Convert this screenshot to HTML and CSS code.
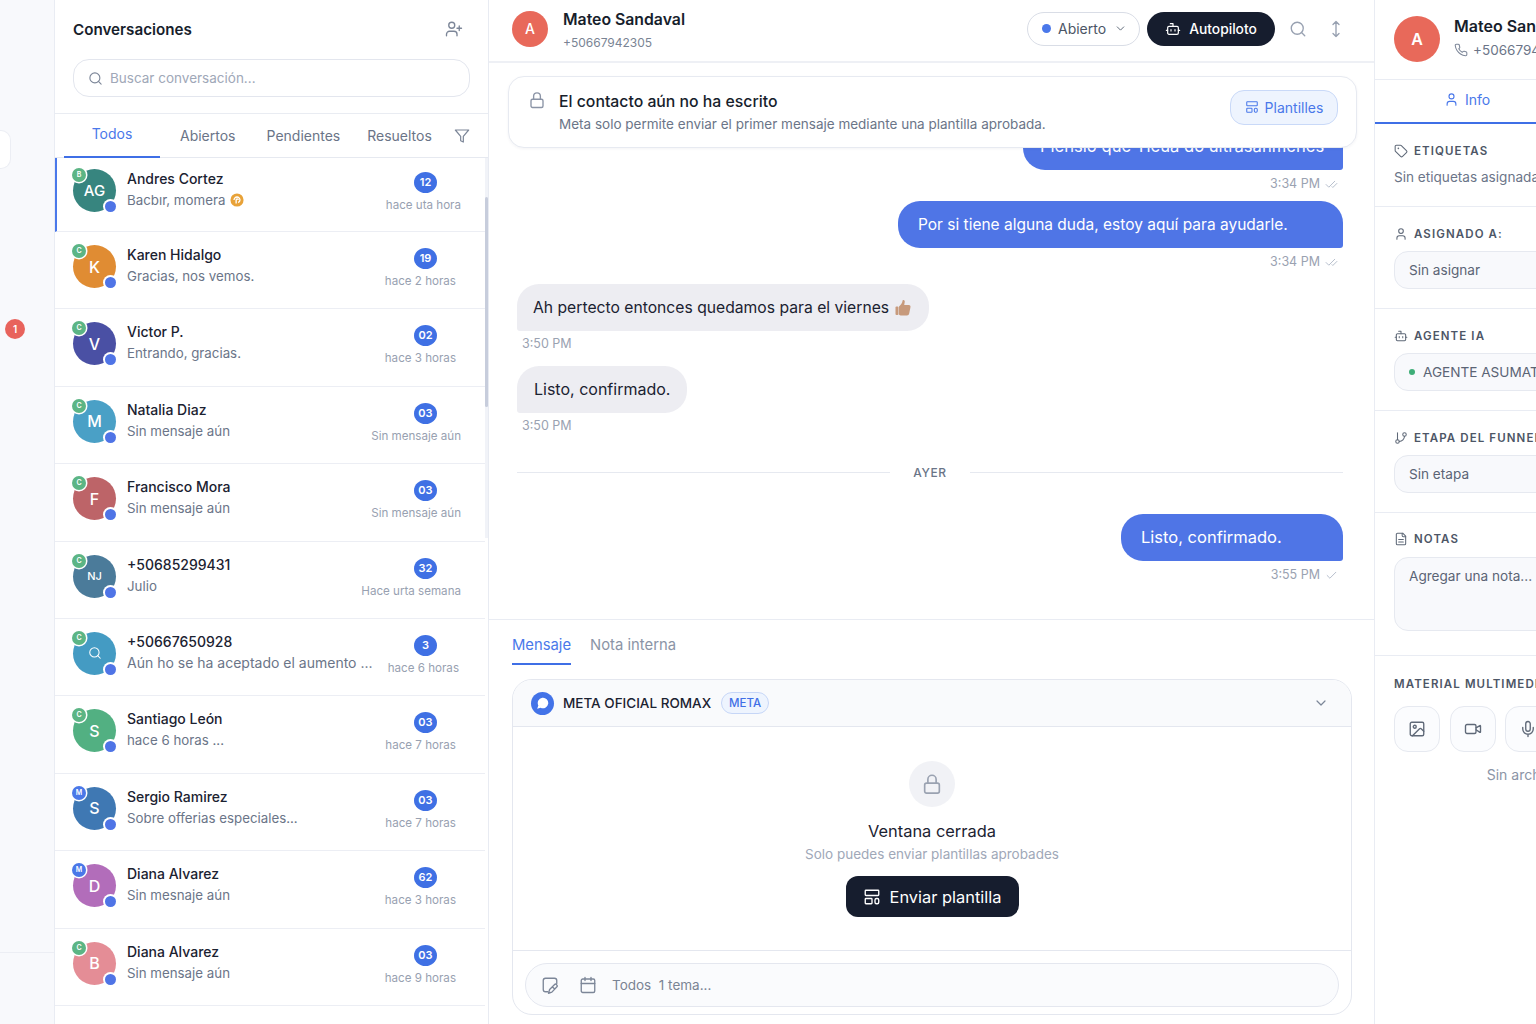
FILE: index.html
```html
<!DOCTYPE html>
<html lang="es">
<head>
  <meta charset="UTF-8" />
  <meta name="viewport" content="width=device-width, initial-scale=1" />
  <title>Conversaciones</title>
  <link rel="stylesheet" href="styles.css">
</head>
<body>

  <!-- Icon sprite -->
  <svg class="sprite" xmlns="http://www.w3.org/2000/svg">
    <symbol id="i-user-plus" viewBox="0 0 24 24"><path d="M16 21v-2a4 4 0 0 0-4-4H6a4 4 0 0 0-4 4v2"/><circle cx="9" cy="7" r="4"/><path d="M19 8v6M22 11h-6"/></symbol>
    <symbol id="i-search" viewBox="0 0 24 24"><circle cx="11" cy="11" r="8"/><path d="m21 21-4.3-4.3"/></symbol>
    <symbol id="i-filter" viewBox="0 0 24 24"><path d="M22 3H2l8 9.46V19l4 2v-8.54z"/></symbol>
    <symbol id="i-lock" viewBox="0 0 24 24"><rect x="4" y="11" width="16" height="11" rx="2"/><path d="M7.5 11V7a4.5 4.5 0 0 1 9 0v4"/></symbol>
    <symbol id="i-bot" viewBox="0 0 24 24"><path d="M12 8V4H8"/><rect x="4" y="8" width="16" height="12" rx="2"/><path d="M2 14h2M20 14h2M15 13v2M9 13v2"/></symbol>
    <symbol id="i-updown" viewBox="0 0 24 24"><path d="M12 2v20M8 6l4-4 4 4M8 18l4 4 4-4"/></symbol>
    <symbol id="i-template" viewBox="0 0 24 24"><rect x="3" y="3" width="18" height="7" rx="1"/><rect x="3" y="14" width="9" height="7" rx="1"/><rect x="16" y="14" width="5" height="7" rx="2"/></symbol>
    <symbol id="i-checks" viewBox="0 0 24 24"><path d="M18 6 7 17l-5-5M22 10l-7.5 7.5L13 16"/></symbol>
    <symbol id="i-check" viewBox="0 0 24 24"><path d="M20 6 9 17l-5-5"/></symbol>
    <symbol id="i-phone" viewBox="0 0 24 24"><path d="M22 16.92v3a2 2 0 0 1-2.18 2 19.79 19.79 0 0 1-8.63-3.07 19.5 19.5 0 0 1-6-6 19.79 19.79 0 0 1-3.07-8.67A2 2 0 0 1 4.11 2h3a2 2 0 0 1 2 1.72 12.84 12.84 0 0 0 .7 2.81 2 2 0 0 1-.45 2.11L8.09 9.91a16 16 0 0 0 6 6l1.27-1.27a2 2 0 0 1 2.11-.45 12.84 12.84 0 0 0 2.81.7A2 2 0 0 1 22 16.92z"/></symbol>
    <symbol id="i-user" viewBox="0 0 24 24"><path d="M19 21v-2a4 4 0 0 0-4-4H9a4 4 0 0 0-4 4v2"/><circle cx="12" cy="7" r="4"/></symbol>
    <symbol id="i-tag" viewBox="0 0 24 24"><path d="M12.586 2.586A2 2 0 0 0 11.172 2H4a2 2 0 0 0-2 2v7.172a2 2 0 0 0 .586 1.414l8.704 8.704a2.426 2.426 0 0 0 3.42 0l6.58-6.58a2.426 2.426 0 0 0 0-3.42z"/><circle cx="7.5" cy="7.5" r=".5"/></symbol>
    <symbol id="i-branch" viewBox="0 0 24 24"><path d="M6 3v12"/><circle cx="18" cy="6" r="3"/><circle cx="6" cy="18" r="3"/><path d="M18 9a9 9 0 0 1-9 9"/></symbol>
    <symbol id="i-file" viewBox="0 0 24 24"><path d="M15 2H6a2 2 0 0 0-2 2v16a2 2 0 0 0 2 2h12a2 2 0 0 0 2-2V7Z"/><path d="M14 2v4a2 2 0 0 0 2 2h4M16 13H8M16 17H8"/></symbol>
    <symbol id="i-image" viewBox="0 0 24 24"><rect x="3" y="3" width="18" height="18" rx="2"/><circle cx="9" cy="9" r="2"/><path d="m21 15-3.086-3.086a2 2 0 0 0-2.828 0L6 21"/></symbol>
    <symbol id="i-video" viewBox="0 0 24 24"><path d="m16 13 5.223 3.482a.5.5 0 0 0 .777-.416V7.87a.5.5 0 0 0-.752-.432L16 10.5"/><rect x="2" y="6" width="14" height="12" rx="2"/></symbol>
    <symbol id="i-mic" viewBox="0 0 24 24"><path d="M12 2a3 3 0 0 0-3 3v7a3 3 0 0 0 6 0V5a3 3 0 0 0-3-3Z"/><path d="M19 10v2a7 7 0 0 1-14 0v-2M12 19v3"/></symbol>
    <symbol id="i-chevron" viewBox="0 0 24 24"><path d="m6 9 6 6 6-6"/></symbol>
    <symbol id="i-calendar" viewBox="0 0 24 24"><rect x="3" y="4" width="18" height="18" rx="2"/><path d="M16 2v4M8 2v4M3 10h18"/></symbol>
    <symbol id="i-note" viewBox="0 0 24 24"><path d="M21 10V6a3 3 0 0 0-3-3H6a3 3 0 0 0-3 3v12a3 3 0 0 0 3 3h3"/><path d="m10 23 1.5-5 7-7c1-1 4 1.5 3 3l-7 7.500zM15 14.5l3 2.5"/></symbol>
  </svg>

  <div class="app">

    <!-- Left rail -->
    <aside class="rail">
      <div class="rail-tab"></div>
      <div class="rail-badge">1</div>
      <div class="rail-line"></div>
    </aside>

    <!-- Conversation list -->
    <section class="list-panel">
      <div class="list-head">
        <h2>Conversaciones</h2>
        <svg class="ico ico-18"><use href="#i-user-plus"/></svg>
      </div>
      <div class="search-wrap">
        <div class="search-box">
          <svg class="ico ico-15"><use href="#i-search"/></svg>
          <span>Buscar conversación...</span>
        </div>
      </div>
      <nav class="list-tabs">
        <a class="list-tab active">Todos</a>
        <a class="list-tab">Abiertos</a>
        <a class="list-tab">Pendientes</a>
        <a class="list-tab">Resueltos</a>
        <svg class="ico ico-16 tab-filter"><use href="#i-filter"/></svg>
      </nav>

      <div class="rows">
        <div class="scroll-track"><div class="scroll-thumb"></div></div>

        <div class="row selected">
          <div class="avatar av-teal">AG<span class="src">B</span><span class="dot"></span></div>
          <div class="row-text">
            <div class="row-name">Andres Cortez</div>
            <div class="row-preview">Bacbır, momera
              <svg class="amber" viewBox="0 0 16 16"><circle cx="8" cy="8" r="7.5"/><path d="M4.6 8a3.4 3.4 0 1 1 6.8 0c0 1.6-1 2.4-2 3M7 12V8a1.2 1.2 0 0 1 2.4 0"/></svg>
            </div>
          </div>
          <div class="row-meta"><span class="count">12</span><span class="time">hace uta hora</span></div>
        </div>

        <div class="row">
          <div class="avatar av-orange">K<span class="src">C</span><span class="dot"></span></div>
          <div class="row-text">
            <div class="row-name">Karen Hidalgo</div>
            <div class="row-preview">Gracias, nos vemos.</div>
          </div>
          <div class="row-meta"><span class="count">19</span><span class="time short">hace 2 horas</span></div>
        </div>

        <div class="row">
          <div class="avatar av-indigo">V<span class="src">C</span><span class="dot"></span></div>
          <div class="row-text">
            <div class="row-name">Victor P.</div>
            <div class="row-preview">Entrando, gracias.</div>
          </div>
          <div class="row-meta"><span class="count">02</span><span class="time short">hace 3 horas</span></div>
        </div>

        <div class="row">
          <div class="avatar av-sky">M<span class="src">C</span><span class="dot"></span></div>
          <div class="row-text">
            <div class="row-name">Natalia Diaz</div>
            <div class="row-preview">Sin mensaje aún</div>
          </div>
          <div class="row-meta"><span class="count">03</span><span class="time">Sin mensaje aún</span></div>
        </div>

        <div class="row">
          <div class="avatar av-rose">F<span class="src">C</span><span class="dot"></span></div>
          <div class="row-text">
            <div class="row-name">Francisco Mora</div>
            <div class="row-preview">Sin mensaje aún</div>
          </div>
          <div class="row-meta"><span class="count">03</span><span class="time">Sin mensaje aún</span></div>
        </div>

        <div class="row">
          <div class="avatar av-slate av-small">NJ<span class="src">C</span><span class="dot"></span></div>
          <div class="row-text">
            <div class="row-name">+50685299431</div>
            <div class="row-preview">Julio</div>
          </div>
          <div class="row-meta"><span class="count">32</span><span class="time">Hace urta semana</span></div>
        </div>

        <div class="row">
          <div class="avatar av-cyan"><svg class="ico ico-14 ico-white"><use href="#i-search"/></svg><span class="src">C</span><span class="dot"></span></div>
          <div class="row-text">
            <div class="row-name">+50667650928</div>
            <div class="row-preview long">Aún ho se ha aceptado el aumento ...</div>
          </div>
          <div class="row-meta"><span class="count">3</span><span class="time mid">hace 6 horas</span></div>
        </div>

        <div class="row">
          <div class="avatar av-green">S<span class="src">C</span><span class="dot"></span></div>
          <div class="row-text">
            <div class="row-name">Santiago León</div>
            <div class="row-preview">hace 6 horas ...</div>
          </div>
          <div class="row-meta"><span class="count">03</span><span class="time short">hace 7 horas</span></div>
        </div>

        <div class="row">
          <div class="avatar av-blue">S<span class="src src-blue">M</span><span class="dot"></span></div>
          <div class="row-text">
            <div class="row-name">Sergio Ramirez</div>
            <div class="row-preview">Sobre offerias especiales...</div>
          </div>
          <div class="row-meta"><span class="count">03</span><span class="time short">hace 7 horas</span></div>
        </div>

        <div class="row">
          <div class="avatar av-purple">D<span class="src src-blue">M</span><span class="dot"></span></div>
          <div class="row-text">
            <div class="row-name">Diana Alvarez</div>
            <div class="row-preview">Sin mesnaje aún</div>
          </div>
          <div class="row-meta"><span class="count">62</span><span class="time short">hace 3 horas</span></div>
        </div>

        <div class="row">
          <div class="avatar av-pink">B<span class="src">C</span><span class="dot"></span></div>
          <div class="row-text">
            <div class="row-name">Diana Alvarez</div>
            <div class="row-preview">Sin mensaje aún</div>
          </div>
          <div class="row-meta"><span class="count">03</span><span class="time short">hace 9 horas</span></div>
        </div>
      </div>
    </section>

    <!-- Chat -->
    <main class="chat">
      <header class="chat-head">
        <div class="chat-avatar">A</div>
        <div class="chat-who">
          <div class="chat-name">Mateo Sandaval</div>
          <div class="chat-phone">+50667942305</div>
        </div>
        <div class="status-pill"><span class="status-dot"></span>Abierto<svg class="ico ico-13"><use href="#i-chevron"/></svg></div>
        <div class="auto-pill"><svg class="ico ico-16 ico-white"><use href="#i-bot"/></svg>Autopiloto</div>
        <svg class="ico ico-18 head-search"><use href="#i-search"/></svg>
        <svg class="ico ico-18 head-arrows"><use href="#i-updown"/></svg>
      </header>

      <div class="thread">
        <div class="notice">
          <svg class="ico ico-18 notice-lock"><use href="#i-lock"/></svg>
          <div class="notice-text">
            <div class="notice-title">El contacto aún no ha escrito</div>
            <div class="notice-desc">Meta solo permite enviar el primer mensaje mediante una plantilla aprobada.</div>
          </div>
          <div class="notice-btn"><svg class="ico ico-14 ico-blue"><use href="#i-template"/></svg>Plantilles</div>
        </div>

        <div class="msg out">
          <div class="bubble b-clip">Pienslo que Tieua do ultrasanmenes</div>
          <div class="msg-time">3:34 PM <svg class="ico ico-13"><use href="#i-checks"/></svg></div>
        </div>
        <div class="msg out tight">
          <div class="bubble b-help">Por si tiene alguna duda, estoy aquí para ayudarle.</div>
          <div class="msg-time">3:34 PM <svg class="ico ico-13"><use href="#i-checks"/></svg></div>
        </div>
        <div class="msg in">
          <div class="bubble b-long">Ah pertecto entonces quedamos para el viernes
            <svg class="thumb" viewBox="0 0 18 18"><path d="M9.5 1c1 0 1.5 1 1.2 2.2L10.2 6h4.6c1.4 0 2 1.2 1.6 2.4l-1.2 6.2c-.3 1.2-1 1.9-2.2 1.9H7.4c-1 0-1.9-.4-2.4-1V7.6c1.7-1.6 3.3-3.6 3.5-5.6 0-.6.4-1 1-1z"/><rect x="1.5" y="7.5" width="3" height="8.5" rx="1"/></svg>
          </div>
          <div class="msg-time">3:50 PM</div>
        </div>
        <div class="msg in">
          <div class="bubble">Listo, confirmado.</div>
          <div class="msg-time">3:50 PM</div>
        </div>

        <div class="day-sep"><span>AYER</span></div>

        <div class="msg out">
          <div class="bubble b-done">Listo, confirmado.</div>
          <div class="msg-time">3:55 PM <svg class="ico ico-13"><use href="#i-check"/></svg></div>
        </div>
      </div>

      <div class="composer">
        <div class="comp-tabs">
          <a class="comp-tab active">Mensaje</a>
          <a class="comp-tab">Nota interna</a>
        </div>
        <div class="comp-card">
          <div class="channel">
            <span class="channel-ico"><svg viewBox="0 0 24 24"><path d="M7.9 20A9 9 0 1 0 4 16.1L2 22Z"/></svg></span>
            <span class="channel-name">META OFICIAL ROMAX</span>
            <span class="channel-tag">META</span>
            <svg class="ico ico-16 channel-chev"><use href="#i-chevron"/></svg>
          </div>
          <div class="closed">
            <div class="closed-ico"><svg class="ico ico-22"><use href="#i-lock"/></svg></div>
            <div class="closed-title">Ventana cerrada</div>
            <div class="closed-sub">Solo puedes enviar plantillas aprobades</div>
            <div class="closed-btn"><svg class="ico ico-18 ico-white"><use href="#i-template"/></svg>Enviar plantilla</div>
          </div>
          <div class="comp-foot">
            <div class="comp-input">
              <svg class="ico ico-18"><use href="#i-note"/></svg>
              <svg class="ico ico-18"><use href="#i-calendar"/></svg>
              <span>Todos&nbsp; 1 tema...</span>
            </div>
          </div>
        </div>
      </div>
    </main>

    <!-- Contact info -->
    <aside class="info">
      <div class="info-head">
        <div class="info-avatar">A</div>
        <div>
          <div class="info-name">Mateo Sandaval</div>
          <div class="info-phone"><svg class="ico ico-14"><use href="#i-phone"/></svg>+50667942305</div>
        </div>
      </div>
      <div class="info-tabs">
        <a class="info-tab"><svg class="ico ico-15 ico-blue"><use href="#i-user"/></svg>Info</a>
      </div>

      <section class="info-sec tags">
        <h4><svg class="ico ico-14"><use href="#i-tag"/></svg>Etiquetas</h4>
        <p class="info-empty">Sin etiquetas asignadas</p>
      </section>
      <section class="info-sec">
        <h4><svg class="ico ico-14"><use href="#i-user"/></svg>Asignado a:</h4>
        <div class="field">Sin asignar</div>
      </section>
      <section class="info-sec">
        <h4><svg class="ico ico-14"><use href="#i-bot"/></svg>Agente IA</h4>
        <div class="field"><span class="field-dot"></span>AGENTE ASUMATE</div>
      </section>
      <section class="info-sec">
        <h4><svg class="ico ico-14"><use href="#i-branch"/></svg>Etapa del funnel</h4>
        <div class="field">Sin etapa</div>
      </section>
      <section class="info-sec notes">
        <h4><svg class="ico ico-14"><use href="#i-file"/></svg>Notas</h4>
        <div class="field field-area">Agregar una nota...</div>
      </section>
      <section class="info-sec media">
        <h4>Material multimedia</h4>
        <div class="media-btns">
          <div class="media-btn"><svg class="ico ico-18"><use href="#i-image"/></svg></div>
          <div class="media-btn"><svg class="ico ico-18"><use href="#i-video"/></svg></div>
          <div class="media-btn"><svg class="ico ico-18"><use href="#i-mic"/></svg></div>
        </div>
        <p class="media-empty">Sin archivos</p>
      </section>
    </aside>
  </div>
</body>
</html>
```

FILE: styles.css
```css
* { box-sizing: border-box; }
html, body {
  margin: 0;
  height: 100%;
  overflow: hidden;
}
body {
  font-family: Inter, "Liberation Sans", sans-serif;
  background: #fff;
  color: #1a2130;
}
.sprite { display: none; }
h2, h4, p { margin: 0; }

.ico {
  fill: none;
  stroke: #7c8698;
  stroke-width: 1.8;
  stroke-linecap: round;
  stroke-linejoin: round;
  flex-shrink: 0;
}
.ico-13 { width: 13px; height: 13px; }
.ico-14 { width: 14px; height: 14px; }
.ico-15 { width: 15px; height: 15px; }
.ico-16 { width: 16px; height: 16px; }
.ico-18 { width: 18px; height: 18px; }
.ico-22 { width: 22px; height: 22px; }
.ico-white { stroke: #fff; }
.ico-blue { stroke: #4a78ea; }

.app {
  display: flex;
  width: 1536px;
  height: 1024px;
  overflow: hidden;
}

/* Rail */
.rail {
  width: 55px;
  flex-shrink: 0;
  background: #f8f9fc;
  border-right: 1px solid #e9ecf3;
  padding-top: 130px;
  display: flex;
  flex-direction: column;
}
.rail-tab {
  width: 11px;
  height: 39px;
  background: #fff;
  border: 1px solid #eceef4;
  border-left: none;
  border-radius: 0 10px 10px 0;
}
.rail-badge {
  width: 20px;
  height: 20px;
  margin: 150px 0 0 5px;
  border-radius: 50%;
  background: #e8635c;
  color: #fff;
  font-size: 10px;
  font-weight: 600;
  display: flex;
  align-items: center;
  justify-content: center;
}
.rail-line {
  height: 1px;
  margin-top: 613px;
  background: #eceef4;
}

/* Conversation list */
.list-panel {
  width: 434px;
  flex-shrink: 0;
  border-right: 1px solid #e8ebf2;
  display: flex;
  flex-direction: column;
}
.list-head {
  height: 59px;
  padding: 0 18px 1px;
  display: flex;
  align-items: center;
  justify-content: space-between;
}
.list-head h2 {
  font-size: 15.2px;
  font-weight: 600;
  color: #171e2c;
}
.list-head .ico { margin-right: 7px; }
.search-wrap {
  padding: 0 18px 16px;
  border-bottom: 1px solid #e9ecf2;
}
.search-box {
  height: 38px;
  border: 1px solid #e3e6ee;
  border-radius: 16px;
  padding: 0 14px;
  display: flex;
  align-items: center;
  gap: 7px;
  font-size: 13.5px;
  color: #a0a8b8;
}
.search-box span { padding-bottom: 1px; }
.list-tabs {
  height: 44px;
  padding: 0 18px 0 9px;
  display: flex;
  align-items: center;
  border-bottom: 1px solid #e6e9f0;
  font-size: 14px;
  color: #6a7487;
}
.list-tab {
  flex-shrink: 0;
  margin-right: 31px;
}
.list-tab:nth-child(3) { margin-right: 27px; }
.list-tab:nth-child(4) { margin-right: 0; }
.list-tab.active {
  width: 96px;
  margin-right: 20px;
  height: 44px;
  line-height: 40px;
  text-align: center;
  color: #4a78ea;
  border-bottom: 2px solid #3f6fe6;
}
.tab-filter { margin-left: auto; }

.rows {
  position: relative;
  flex: 1;
  overflow: hidden;
}
.scroll-track {
  position: absolute;
  top: 0;
  right: 0;
  width: 3px;
  height: 380px;
  background: #f1f3f8;
}
.scroll-thumb {
  margin-top: 39px;
  height: 210px;
  background: #c7cddc;
  border-radius: 2px;
}
.row {
  width: 430px;
  height: 77.4px;
  padding: 13px 24px 0 18px;
  display: flex;
  align-items: flex-start;
  border-bottom: 1px solid #eceef4;
}
.row.selected {
  height: 74px;
  padding: 11px 24px 0 16px;
  border-left: 2px solid #4a78ea;
}
.avatar {
  position: relative;
  width: 43px;
  height: 43px;
  flex-shrink: 0;
  border-radius: 50%;
  color: #fff;
  font-size: 16px;
  font-weight: 500;
  display: flex;
  align-items: center;
  justify-content: center;
}
.av-small { font-size: 11px; }
.av-teal { background: #37857f; font-size: 15px; }
.av-orange { background: #e08c33; }
.av-indigo { background: #4a50a4; }
.av-sky { background: #4aa0c6; }
.av-rose { background: #bd6468; }
.av-slate { background: #4b7b9a; }
.av-cyan { background: #449bc3; }
.av-green { background: #52b082; }
.av-blue { background: #3f78b3; }
.av-purple { background: #b26dba; }
.av-pink { background: #e48d96; }
.src {
  position: absolute;
  top: -1px;
  left: -1px;
  width: 14px;
  height: 14px;
  border-radius: 50%;
  background: #5cb585;
  box-shadow: 0 0 0 1.5px #fff;
  font-size: 7px;
  line-height: 14px;
  text-align: center;
  font-weight: 600;
}
.src-blue { background: #4a78e8; }
.dot {
  position: absolute;
  right: 0;
  bottom: 0;
  width: 11px;
  height: 11px;
  border-radius: 50%;
  background: #4f74e6;
  box-shadow: 0 0 0 2px #fff;
}
.row-text {
  flex: 1;
  min-width: 0;
  margin-left: 11px;
}
.row-name {
  font-size: 14px;
  line-height: 20px;
  font-weight: 500;
  color: #1b2231;
}
.row-preview {
  margin-top: 1px;
  font-size: 13.3px;
  line-height: 20px;
  color: #6b7588;
  white-space: nowrap;
  display: flex;
  align-items: center;
  gap: 5px;
}
.row-preview.long { font-size: 14px; }
.amber {
  width: 14px;
  height: 14px;
  fill: none;
  stroke: #fff;
  stroke-width: 1.5;
}
.amber circle { fill: #e8a238; stroke: none; }
.row-meta {
  display: flex;
  flex-direction: column;
  align-items: flex-end;
  margin-top: 3px;
}
.count {
  width: 23px;
  height: 21px;
  margin-right: 24px;
  border-radius: 50%;
  background: #3f70e4;
  color: #fff;
  font-size: 11px;
  font-weight: 600;
  line-height: 21px;
  text-align: center;
}
.time {
  margin-top: 4px;
  font-size: 11.6px;
  line-height: 16px;
  color: #98a1b1;
  white-space: nowrap;
}
.time.short { padding-right: 5px; }
.time.mid { padding-right: 2px; }

/* Chat */
.chat {
  width: 886px;
  flex-shrink: 0;
  display: flex;
  flex-direction: column;
  border-right: 1px solid #e9ecf3;
}
.chat-head {
  height: 63px;
  flex-shrink: 0;
  padding: 0 29px 4px 23px;
  border-bottom: 2px solid #eef0f5;
  display: flex;
  align-items: center;
}
.chat-avatar {
  width: 36px;
  height: 36px;
  border-radius: 50%;
  background: #e8695a;
  color: #fff;
  font-size: 14px;
  font-weight: 500;
  display: flex;
  align-items: center;
  justify-content: center;
}
.chat-who { margin-left: 15px; padding-top: 3px; flex: 1; }
.chat-name {
  font-size: 15.8px;
  line-height: 22px;
  font-weight: 600;
  color: #171e2c;
}
.chat-phone {
  margin-top: 4px;
  font-size: 12px;
  line-height: 16px;
  color: #7a8494;
}
.status-pill {
  width: 113px;
  height: 34px;
  padding-left: 14px;
  border: 1px solid #d9dde6;
  border-radius: 17px;
  display: flex;
  align-items: center;
  gap: 7px;
  font-size: 14px;
  color: #4b5565;
}
.status-dot {
  width: 9px;
  height: 9px;
  border-radius: 50%;
  background: #4a78ea;
}
.status-pill .ico { margin-left: 1px; stroke: #5f6978; }
.auto-pill {
  width: 128px;
  height: 34px;
  margin-left: 7px;
  border-radius: 17px;
  background: #161d2e;
  color: #fff;
  font-size: 13.8px;
  font-weight: 500;
  display: flex;
  align-items: center;
  justify-content: center;
  gap: 8px;
}
.head-search { margin-left: 14px; stroke: #98a1b1; }
.head-arrows { margin-left: 20px; stroke: #98a1b1; }

.thread {
  position: relative;
  flex: 1;
  overflow: hidden;
  padding: 46px 31px 0 28px;
  display: flex;
  flex-direction: column;
}
.notice {
  position: absolute;
  top: 13px;
  left: 19px;
  width: 849px;
  height: 72px;
  padding: 0 18px 0 19px;
  background: #fff;
  border: 1px solid #e7eaf1;
  border-radius: 16px;
  box-shadow: 0 1px 3px rgba(30, 40, 70, 0.05);
  display: flex;
  align-items: center;
  z-index: 2;
}
.notice-lock { margin-top: -24px; stroke: #8b94a6; }
.notice-text { flex: 1; margin-left: 13px; }
.notice-title {
  font-size: 15.8px;
  line-height: 22px;
  font-weight: 500;
  color: #171e2c;
}
.notice-desc {
  margin-top: 1px;
  font-size: 13.5px;
  line-height: 20px;
  color: #6b7588;
}
.notice-btn {
  width: 108px;
  height: 35px;
  margin-top: -10px;
  background: #eef4fe;
  border: 1px solid #c9d9f8;
  border-radius: 14px;
  color: #4a78ea;
  font-size: 14px;
  display: flex;
  align-items: center;
  justify-content: center;
  gap: 6px;
}

.msg { display: flex; flex-direction: column; margin-top: 14px; }
.msg.out { align-items: flex-end; }
.msg.in { align-items: flex-start; }
.msg.tight { margin-top: 9px; }
.bubble {
  height: 47px;
  padding: 0 20px;
  font-size: 16px;
  line-height: 47px;
  white-space: nowrap;
  display: flex;
  align-items: center;
  gap: 5px;
}
.out .bubble {
  background: #4f75e6;
  color: #fff;
  border-radius: 22px 22px 3px 22px;
}
.in .bubble {
  background: #ededf2;
  color: #1b2231;
  border-radius: 22px 22px 22px 3px;
  padding: 0 17px;
}
.out .b-clip { width: 320px; padding: 0 0 0 17px; font-size: 16.6px; }
.out .b-help { width: 445px; font-size: 15.5px; }
.out .b-done { width: 222px; font-size: 16.5px; }
.in .b-long { width: 412px; padding: 0 0 0 16px; font-size: 15.7px; }
.msg-time {
  margin-top: 6px;
  font-size: 12.5px;
  line-height: 16px;
  color: #9aa2b1;
  display: flex;
  align-items: center;
  gap: 5px;
}
.out .msg-time { padding-right: 5px; }
.out .msg-time .ico { stroke: #a6b0c2; stroke-width: 1.5; }
.in .msg-time { margin-top: 5px; padding-left: 5px; }
.thumb { width: 18px; height: 18px; fill: #c79a7c; }

.day-sep {
  margin-top: 30px;
  height: 16px;
  display: flex;
  align-items: center;
  gap: 23px;
  font-size: 12px;
  font-weight: 500;
  letter-spacing: 0.6px;
  color: #6a7487;
}
.day-sep::before, .day-sep::after {
  content: "";
  flex: 1;
  height: 1px;
  background: #e6e9f0;
}
.day-sep + .msg { margin-top: 34px; }

/* Composer */
.composer {
  height: 405px;
  flex-shrink: 0;
  border-top: 1px solid #e9ecf3;
  padding: 0 23px;
}
.comp-tabs { display: flex; gap: 19px; }
.comp-tab {
  padding: 15px 0 8px;
  font-size: 14.8px;
  line-height: 20px;
  color: #8b94a6;
}
.comp-tab.active {
  color: #4a78ea;
  border-bottom: 2px solid #3f6fe6;
}
.comp-card {
  margin-top: 14px;
  width: 840px;
  height: 336px;
  border: 1px solid #e4e7ef;
  border-radius: 20px;
  overflow: hidden;
  display: flex;
  flex-direction: column;
}
.channel {
  height: 47px;
  flex-shrink: 0;
  padding: 0 22px 0 18px;
  background: #f9fafc;
  border-bottom: 1px solid #e4e7ef;
  display: flex;
  align-items: center;
}
.channel-ico {
  width: 23px;
  height: 23px;
  border-radius: 50%;
  background: #4373e8;
  display: flex;
  align-items: center;
  justify-content: center;
}
.channel-ico svg { width: 14px; height: 14px; fill: #fff; }
.channel-name {
  margin-left: 9px;
  font-size: 13.5px;
  font-weight: 500;
  color: #1b2231;
}
.channel-tag {
  margin-left: 10px;
  padding: 0 7px;
  height: 22px;
  line-height: 20px;
  border: 1px solid #c6d6f7;
  border-radius: 11px;
  background: #eef4fe;
  color: #3f6fe6;
  font-size: 11.5px;
  font-weight: 500;
}
.channel-chev { margin-left: auto; }
.closed {
  flex: 1;
  padding-top: 34px;
  display: flex;
  flex-direction: column;
  align-items: center;
}
.closed-ico {
  width: 46px;
  height: 46px;
  border-radius: 50%;
  background: #f1f2f6;
  display: flex;
  align-items: center;
  justify-content: center;
}
.closed-ico .ico { stroke: #9aa2b1; }
.closed-title {
  margin-top: 13px;
  font-size: 16.4px;
  line-height: 22px;
  font-weight: 400;
  color: #1b2231;
}
.closed-sub {
  margin-top: 2px;
  font-size: 13.5px;
  line-height: 20px;
  color: #a0a8b8;
}
.closed-btn {
  width: 173px;
  height: 41px;
  margin-top: 12px;
  background: #161d2e;
  border-radius: 12px;
  color: #fff;
  font-size: 16.4px;
  font-weight: 400;
  display: flex;
  align-items: center;
  justify-content: center;
  gap: 9px;
}
.comp-foot {
  height: 64px;
  flex-shrink: 0;
  padding: 12px 12px 0;
  border-top: 1px solid #e4e7ef;
}
.comp-input {
  height: 44px;
  padding: 0 15px;
  background: #fafbfd;
  border: 1px solid #e4e7ef;
  border-radius: 22px;
  display: flex;
  align-items: center;
  gap: 20px;
  font-size: 13.5px;
  color: #7a8494;
}
.comp-input span { margin-left: -5px; }

/* Info panel */
.info {
  width: 304px;
  flex-shrink: 0;
  display: flex;
  flex-direction: column;
}
.info-head {
  height: 80px;
  flex-shrink: 0;
  padding: 0 19px 2px 19px;
  border-bottom: 1px solid #e9ecf3;
  display: flex;
  align-items: center;
  gap: 14px;
}
.info-avatar {
  width: 46px;
  height: 46px;
  border-radius: 50%;
  background: #e8695a;
  color: #fff;
  font-size: 16px;
  font-weight: 600;
  display: flex;
  align-items: center;
  justify-content: center;
}
.info-name {
  font-size: 16px;
  line-height: 22px;
  font-weight: 600;
  color: #171e2c;
  margin-top: -3px;
}
.info-phone {
  margin-top: 4px;
  font-size: 13.5px;
  line-height: 18px;
  color: #6b7588;
  display: flex;
  align-items: center;
  gap: 5px;
}
.info-tabs {
  height: 44px;
  flex-shrink: 0;
  border-bottom: 2px solid #3f6fe6;
  display: flex;
}
.info-tab {
  width: 184px;
  padding: 0 0 3px 0;
  color: #4a78ea;
  font-size: 14px;
  display: flex;
  align-items: center;
  justify-content: center;
  gap: 6px;
}
.info-sec {
  flex-shrink: 0;
  padding: 19px 19px 19px;
  border-bottom: 1px solid #e9ecf3;
}
.info-sec h4 {
  display: flex;
  align-items: center;
  gap: 6px;
  height: 16px;
  font-size: 11.5px;
  font-weight: 600;
  letter-spacing: 1.1px;
  text-transform: uppercase;
  color: #4d5666;
  white-space: nowrap;
}
.info-sec h4 .ico { stroke: #5f6978; }
.tags { padding-bottom: 20px; }
.info-empty {
  margin-top: 9px;
  font-size: 13.6px;
  line-height: 18px;
  color: #6b7588;
  white-space: nowrap;
}
.field {
  margin-top: 9px;
  width: 280px;
  height: 38px;
  padding: 0 14px;
  background: #f8f9fc;
  border: 1px solid #e6e9f0;
  border-radius: 14px;
  display: flex;
  align-items: center;
  gap: 8px;
  font-size: 13.6px;
  color: #5b6475;
  white-space: nowrap;
}
.field-dot {
  width: 6px;
  height: 6px;
  border-radius: 50%;
  background: #3fae78;
}
.field-area {
  height: 74px;
  margin-top: 10px;
  padding-top: 9px;
  align-items: flex-start;
  line-height: 18px;
}
.notes { padding-top: 18px; padding-bottom: 24px; }
.media { padding-top: 20px; border-bottom: none; }
.media-btns {
  margin-top: 14px;
  display: flex;
  gap: 9.5px;
}
.media-btn {
  width: 46px;
  height: 46px;
  border: 1px solid #e6e9f0;
  border-radius: 14px;
  background: #fbfcfe;
  display: flex;
  align-items: center;
  justify-content: center;
}
.media-btn .ico { stroke: #5f6978; }
.media-empty {
  margin-top: 14px;
  text-align: center;
  font-size: 14px;
  line-height: 18px;
  color: #8b94a6;
}
```
